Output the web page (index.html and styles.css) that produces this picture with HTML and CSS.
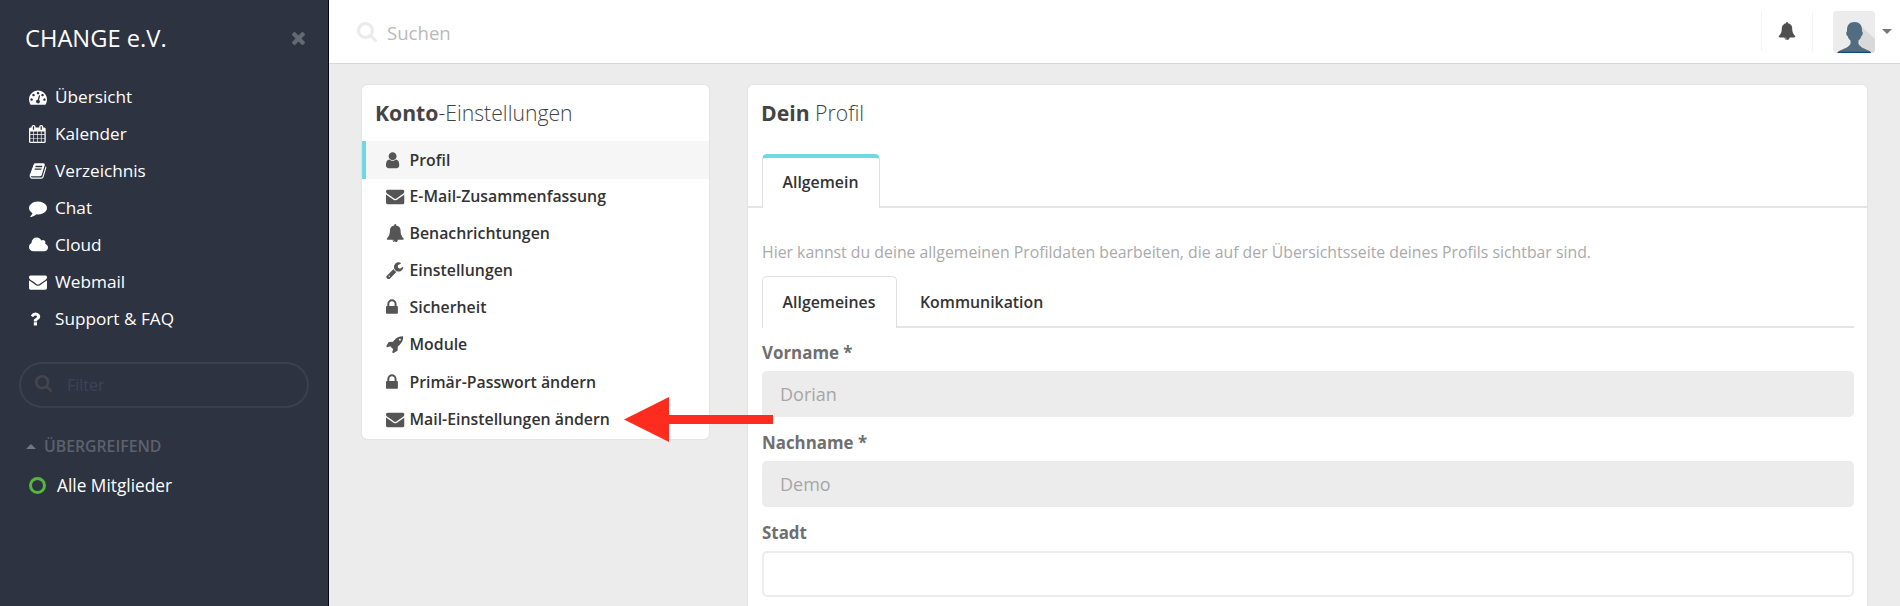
FILE: index.html
```html
<!DOCTYPE html>
<html lang="de">
<head>
<meta charset="utf-8">
<title>Konto-Einstellungen</title>
<link rel="stylesheet" href="styles.css">
</head>
<body>
<svg class="sprite" aria-hidden="true">
  <symbol id="i-dash" viewBox="0 0 1792 1792"><path d="M384 1152q0-53-37.5-90.5t-90.5-37.5-90.5 37.5-37.5 90.5 37.5 90.5 90.5 37.5 90.5-37.5 37.5-90.5zm192-448q0-53-37.5-90.5t-90.5-37.5-90.5 37.5-37.5 90.5 37.5 90.5 90.5 37.5 90.5-37.5 37.5-90.5zm428 481l101-382q6-26-7.5-48.5t-38.5-29.5-48 6.5-30 39.5l-101 382q-60 5-107 43.5t-63 98.5q-20 77 20 146t117 89 146-20 89-117q16-60-6-117t-72-91zm660-33q0-53-37.5-90.5t-90.5-37.5-90.5 37.5-37.5 90.5 37.5 90.5 90.5 37.5 90.5-37.5 37.5-90.5zm-640-640q0-53-37.5-90.5t-90.5-37.5-90.5 37.5-37.5 90.5 37.5 90.5 90.5 37.5 90.5-37.5 37.5-90.5zm448 192q0-53-37.5-90.5t-90.5-37.5-90.5 37.5-37.5 90.5 37.5 90.5 90.5 37.5 90.5-37.5 37.5-90.5zm320 448q0 261-141 483-19 29-54 29h-1402q-35 0-54-29-141-221-141-483 0-182 71-348t191-286 286-191 348-71 348 71 286 191 191 286 71 348z"/></symbol>
  <symbol id="i-cal" viewBox="64 0 1792 1792"><path d="M192 1664h288v-288h-288v288zm352 0h320v-288h-320v288zm-352-352h288v-320h-288v320zm352 0h320v-320h-320v320zm-352-384h288v-288h-288v288zm736 736h320v-288h-320v288zm-384-736h320v-288h-320v288zm768 736h288v-288h-288v288zm-384-352h320v-320h-320v320zm-352-864v-288q0-13-9.5-22.5t-22.5-9.5h-64q-13 0-22.5 9.5t-9.5 22.5v288q0 13 9.5 22.5t22.5 9.5h64q13 0 22.5-9.5t9.5-22.5zm736 864h288v-320h-288v320zm-384-384h320v-288h-320v288zm384 0h288v-288h-288v288zm32-480v-288q0-13-9.5-22.5t-22.5-9.5h-64q-13 0-22.5 9.5t-9.5 22.5v288q0 13 9.5 22.5t22.5 9.5h64q13 0 22.5-9.5t9.5-22.5zm384-64v1280q0 52-38 90t-90 38h-1408q-52 0-90-38t-38-90v-1280q0-52 38-90t90-38h128v-96q0-66 47-113t113-47h64q66 0 113 47t47 113v96h384v-96q0-66 47-113t113-47h64q66 0 113 47t47 113v96h128q52 0 90 38t38 90z"/></symbol>
  <symbol id="i-book" viewBox="0 0 1792 1792"><path d="M1703 478q40 57 18 129l-275 906q-19 64-76.5 107.5t-122.5 43.5h-923q-77 0-148.5-53.5t-99.5-131.5q-24-67-2-127 0-4 3-27t4-37q1-8-3-21.5t-3-19.5q2-11 8-21t16.5-23.5 16.5-23.5q23-38 45-91.5t30-91.5q3-10 .5-30t-.5-28q3-11 17-28t17-23q21-36 42-92t25-90q1-9-2.5-32t.5-28q4-13 22-30.5t22-22.5q19-26 42.5-84.5t27.5-96.5q1-8-3-25.5t-2-26.5q2-8 9-18t18-23 17-21q8-12 16.5-30.5t15-35 16-36 19.5-32 26.5-23.5 36-11.5 47.5 5.5l-1 3q38-9 51-9h761q74 0 114 56t18 130l-274 906q-36 119-71.5 153.5t-128.5 34.5h-869q-27 0-38 15-11 16-1 43 24 70 144 70h923q29 0 56-15.5t35-41.5l300-987q7-22 5-57 38 15 59 43zm-1064 2q-4 13 2 22.5t20 9.5h608q13 0 25.5-9.5t16.5-22.5l21-64q4-13-2-22.5t-20-9.5h-608q-13 0-25.5 9.5t-16.5 22.5zm-83 256q-4 13 2 22.5t20 9.5h608q13 0 25.5-9.5t16.5-22.5l21-64q4-13-2-22.5t-20-9.5h-608q-13 0-25.5 9.5t-16.5 22.5z"/></symbol>
  <symbol id="i-chat" viewBox="0 0 1792 1792"><path d="M1792 896q0 174-120 321.5t-326 233-450 85.5q-70 0-145-8-198 175-460 242-49 14-114 22-17 2-30.5-9t-17.5-29v-1q-3-4-.5-12t2-10 4.5-9.5l6-9 7-8.5 8-9q7-8 31-34.5t34.5-38 31-39.5 32.5-51 27-59 26-76q-157-89-247.5-220t-90.5-281q0-130 71-248.5t191-204.5 286-136.5 348-50.5q244 0 450 85.5t326 233 120 321.5z"/></symbol>
  <symbol id="i-cloud" viewBox="64 0 1920 1792"><path d="M1984 1152q0 159-112.5 271.5t-271.5 112.5h-1088q-185 0-316.5-131.5t-131.5-316.5q0-132 71-241.5t187-163.5q-2-28-2-43 0-212 150-362t362-150q158 0 286.5 88t187.5 230q70-62 166-62 106 0 181 75t75 181q0 75-41 138 129 30 213 134.5t84 239.5z"/></symbol>
  <symbol id="i-mail" viewBox="0 0 1792 1792"><path d="M1792 710v794q0 66-47 113t-113 47h-1472q-66 0-113-47t-47-113v-794q44 49 101 87 362 246 497 345 57 42 92.500 65.500t94.500 48 110 24.500h2q51 0 110-24.500t94.500-48 92.500-65.500q170-123 498-345 57-39 100-87zm0-294q0 79-49 151t-122 123q-376 261-468 325-10 7-42.500 31t-54 38.500-52 32.500-57.500 27-50 9h-2q-23 0-50-9t-57.500-27-52-32.500-54-38.500-42.500-31q-91-64-262-182.500t-205-142.500q-62-42-117-115.500t-55-136.500q0-78 41.500-130t118.500-52h1472q65 0 112.500 47t47.500 113z"/></symbol>
  <symbol id="i-help" viewBox="290 0 1792 1792"><path d="M1088 1256v240q0 16-12 28t-28 12h-240q-16 0-28-12t-12-28v-240q0-16 12-28t28-12h240q16 0 28 12t12 28zm316-600q0 54-15.500 101t-35 76.500-55 59.500-57.500 43.500-61 35.500q-41 23-68.500 65t-27.500 67q0 17-12 32.500t-28 15.500h-240q-15 0-25.500-18.500t-10.500-37.500v-45q0-83 65-156.500t143-108.500q59-27 84-56t25-76q0-42-46.500-74t-107.500-32q-65 0-108 29-35 25-107 115-13 16-31 16-12 0-25-8l-164-125q-13-10-15.500-25t5.500-28q160-266 464-266 80 0 161 31t146 83 106 127.500 41 158.500z"/></symbol>
  <symbol id="i-user" viewBox="256 0 1792 1792"><path d="M1536 1399q0 109-62.500 187t-150.500 78h-854q-88 0-150.500-78t-62.500-187q0-85 8.500-160.500t31.500-152 58.500-131 94-89 134.500-34.500q131 128 313 128t313-128q76 0 134.500 34.500t94 89 58.500 131 31.500 152 8.500 160.500zm-256-887q0 159-112.500 271.500t-271.500 112.500-271.500-112.500-112.500-271.500 112.500-271.500 271.500-112.500 271.500 112.500 112.500 271.500z"/></symbol>
  <symbol id="i-bell" viewBox="0 0 1792 1792"><path d="M912 1696q0-16-16-16-59 0-101.500-42.500t-42.500-101.500q0-16-16-16t-16 16q0 73 51.500 124.500t124.500 51.500q16 0 16-16zm816-288q0 52-38 90t-90 38h-448q0 106-75 181t-181 75-181-75-75-181h-448q-52 0-90-38t-38-90q50-42 91-88t85-119.500 74.500-158.500 50-206 19.500-260q0-152 117-282.500t307-158.500q-8-19-8-39 0-40 28-68t68-28 68 28 28 68q0 20-8 39 190 28 307 158.500t117 282.500q0 139 19.500 260t50 206 74.500 158.500 85 119.500 91 88z"/></symbol>
  <symbol id="i-wrench" viewBox="64 0 1792 1792"><path d="M448 1472q0-26-19-45t-45-19-45 19-19 45 19 45 45 19 45-19 19-45zm644-420l-682 682q-37 37-90 37-52 0-91-37l-106-108q-38-36-38-90 0-53 38-91l681-681q39 98 114.500 173.500t173.500 114.500zm634-435q0 39-23 106-47 134-164.500 217.500t-258.500 83.500q-185 0-316.500-131.500t-131.500-316.500 131.500-316.500 316.500-131.500q58 0 121.500 16.500t107.500 46.500q16 11 16 28t-16 28l-293 169v224l193 107q5-3 79-48.500t135.500-81 70.500-35.500q15 0 23.500 10t8.500 25z"/></symbol>
  <symbol id="i-lock" viewBox="320 0 1792 1792"><path d="M640 768h512v-192q0-106-75-181t-181-75-181 75-75 181v192zm832 96v576q0 40-28 68t-68 28h-960q-40 0-68-28t-28-68v-576q0-40 28-68t68-28h32v-192q0-184 132-316t316-132 316 132 132 316v192h32q40 0 68 28t28 68z"/></symbol>
  <symbol id="i-rocket" viewBox="0 0 1792 1792"><path d="M1440 448q0-40-28-68t-68-28-68 28-28 68 28 68 68 28 68-28 28-68zm224-288q0 249-75.500 430.500t-253.500 360.500q-81 80-195 176l-20 379q-2 16-16 26l-384 224q-7 4-16 4-12 0-23-9l-64-64q-13-14-8-32l85-276-281-281-276 85q-3 1-9 1-14 0-23-9l-64-64q-17-19-5-39l224-384q10-14 26-16l379-20q96-114 176-195 188-187 358-258t431-71q14 0 24 9.500t10 22.500z"/></symbol>
  <symbol id="i-search" viewBox="64 128 1664 1664"><path d="M1216 832q0-185-131.500-316.500t-316.500-131.500-316.500 131.500-131.500 316.500 131.500 316.500 316.500 131.500 316.500-131.500 131.500-316.500zm512 832q0 52-38 90t-90 38q-54 0-90-38l-343-342q-179 124-399 124-143 0-273.500-55.500t-225-150-150-225-55.500-273.500 55.500-273.500 150-225 225-150 273.500-55.500 273.500 55.500 225 150 150 225 55.500 273.500q0 220-124 399l343 343q37 37 37 90z"/></symbol>
  <symbol id="i-times" viewBox="302 366 1188 1188"><path d="M1490 1322q0 40-28 68l-136 136q-28 28-68 28t-68-28l-294-294-294 294q-28 28-68 28t-68-28l-136-136q-28-28-28-68t28-68l294-294-294-294q-28-28-28-68t28-68l136-136q28-28 68-28t68 28l294 294 294-294q28-28 68-28t68 28l136 136q28 28 28 68t-28 68l-294 294 294 294q28 28 28 68z"/></symbol>
</svg>

<div class="app">
  <aside class="sidebar">
    <header class="brand">
      <span class="brand-name">CHANGE e.V.</span>
      <svg class="close"><use href="#i-times"/></svg>
    </header>
    <nav class="nav">
      <a class="nav-item"><svg class="icon"><use href="#i-dash"/></svg>Übersicht</a>
      <a class="nav-item"><svg class="icon"><use href="#i-cal"/></svg>Kalender</a>
      <a class="nav-item"><svg class="icon"><use href="#i-book"/></svg>Verzeichnis</a>
      <a class="nav-item"><svg class="icon"><use href="#i-chat"/></svg>Chat</a>
      <a class="nav-item"><svg class="icon icon-wide"><use href="#i-cloud"/></svg>Cloud</a>
      <a class="nav-item"><svg class="icon"><use href="#i-mail"/></svg>Webmail</a>
      <a class="nav-item"><svg class="icon"><use href="#i-help"/></svg>Support &amp; FAQ</a>
    </nav>
    <div class="filter"><svg class="filter-icon"><use href="#i-search"/></svg><span>Filter</span></div>
    <div class="group"><i class="group-caret"></i>ÜBERGREIFEND</div>
    <a class="member"><i class="ring"></i>Alle Mitglieder</a>
  </aside>

  <div class="page">
    <header class="topbar">
      <svg class="search-icon"><use href="#i-search"/></svg>
      <span class="search-text">Suchen</span>
      <div class="bell-box"><svg class="bell"><use href="#i-bell"/></svg></div>
      <svg class="avatar" viewBox="0 0 42 42">
        <path class="avatar-shade" d="M27 14L42 28V42H26z"/>
        <path class="avatar-body" d="M21.500 11c5 0 7.500 3 7.500 8v1.500c1.200 0 1 4-.6 4.500-.6 2-1.700 3.500-2.900 4.600v3.200c1.500 3.600 6.500 5.200 10 6.700 1.300.6 2 1.300 2.500 2.500H4.500c.5-1.200 1.200-1.900 2.500-2.500 3.500-1.500 9-3.100 10.500-6.700v-3.200c-1.200-1.100-2.300-2.600-2.900-4.600-1.600-.5-1.800-4.500-.6-4.500V19c0-5 2.500-8 7.500-8z"/>
        <path class="avatar-base" d="M4.500 42c.2-.5.400-.8.700-1.200h32.100c.3.400.5.700.7 1.200z"/>
      </svg>
      <i class="caret"></i>
    </header>

    <main class="content">
      <section class="panel settings">
        <h2 class="title"><b>Konto</b>-Einstellungen</h2>
        <a class="row active"><svg class="icon"><use href="#i-user"/></svg>Profil</a>
        <a class="row"><svg class="icon"><use href="#i-mail"/></svg>E-Mail-Zusammenfassung</a>
        <a class="row"><svg class="icon"><use href="#i-bell"/></svg>Benachrichtungen</a>
        <a class="row"><svg class="icon"><use href="#i-wrench"/></svg>Einstellungen</a>
        <a class="row"><svg class="icon"><use href="#i-lock"/></svg>Sicherheit</a>
        <a class="row"><svg class="icon"><use href="#i-rocket"/></svg>Module</a>
        <a class="row spaced"><svg class="icon"><use href="#i-lock"/></svg>Primär-Passwort ändern</a>
        <a class="row"><svg class="icon"><use href="#i-mail"/></svg>Mail-Einstellungen ändern</a>
      </section>

      <section class="panel profile">
        <h2 class="title"><b>Dein</b> Profil</h2>
        <div class="tabs"><span class="tab tab-main">Allgemein</span></div>
        <div class="body">
          <p class="hint">Hier kannst du deine allgemeinen Profildaten bearbeiten, die auf der Übersichtsseite deines Profils sichtbar sind.</p>
          <div class="subtabs"><span class="tab tab-sub">Allgemeines</span><span class="tab-plain">Kommunikation</span></div>
          <label class="label">Vorname *</label>
          <div class="field disabled">Dorian</div>
          <label class="label">Nachname *</label>
          <div class="field disabled">Demo</div>
          <label class="label">Stadt</label>
          <div class="field"></div>
        </div>
      </section>
    </main>
  </div>
  <svg class="arrow" viewBox="0 0 149 45"><path d="M0 22.500L45 0V18H149V27H45V45z"/></svg>
</div>
</body>
</html>
```
FILE: styles.css
```css
* { box-sizing: border-box; }
body { margin: 0; font-family: "Open Sans", "Noto Sans", sans-serif; background: #ececec; }
.sprite { display: none; }
.app { display: flex; width: 1900px; height: 606px; overflow: hidden; position: relative; }

.sidebar { width: 329px; background: #2e3341; border-right: 1px solid #05070d; color: #fff; flex: none; }
.brand { display: flex; justify-content: space-between; align-items: center; height: 76px; padding: 0 23px 0 25px; }
.brand-name { font-size: 23.700px; }
.close { width: 13px; height: 13px; fill: #656974; }
.nav { padding: 2px 0 0 29px; }
.nav-item { display: flex; align-items: center; gap: 8px; height: 37px; font-size: 17.200px; }
.icon { width: 18px; height: 18px; fill: currentColor; flex: none; }
.icon-wide { width: 19px; margin-right: -1px; }
.filter { display: flex; align-items: center; gap: 15px; width: 290px; height: 46px; margin: 25px 0 0 19px; padding-left: 14px; border: 2px solid #3b4050; border-radius: 23px; font-size: 16px; color: #3d4357; }
.filter-icon { width: 17px; height: 17px; fill: #44464f; margin-top: -4px; }
.group { display: flex; align-items: center; gap: 8px; height: 24px; margin: 26px 0 0 26px; font-size: 15.800px; font-weight: 600; color: #5d616d; }
.group-caret { border: 5px solid transparent; border-top: 0; border-bottom: 5px solid #73767f; }
.member { display: flex; align-items: center; gap: 11px; height: 28px; margin: 13px 0 0 29px; font-size: 17.300px; }
.ring { width: 17px; height: 17px; border: 3px solid #55b73c; border-radius: 50%; }

.page { flex: 1; }
.topbar { display: flex; align-items: center; height: 64px; padding: 0 8px 0 28px; background: #fff; border-bottom: 1px solid #d8d8d8; }
.search-icon { width: 20px; height: 20px; fill: #ebebeb; }
.search-text { margin: 1px auto 0 10px; font-size: 18.600px; color: #b9b9b9; }
.bell-box { display: flex; align-items: center; justify-content: center; width: 52px; height: 40px; margin: 0 20px 2px 0; border: 1px solid #f4f4f4; border-width: 0 1px; }
.bell { width: 18px; height: 18px; fill: #4f4f4f; }
.avatar { width: 42px; height: 42px; border-radius: 4px; background: #ececec; }
.avatar-shade { fill: #d9d9d9; }
.avatar-body { fill: #526d82; }
.avatar-base { fill: #104a76; }
.caret { margin: 0 0 1px 7px; border: 5px solid transparent; border-top-color: #777; border-bottom: 0; }

.content { display: flex; align-items: flex-start; gap: 39px; padding: 21px 33px 0; }
.panel { background: #fff; border-radius: 5px; box-shadow: 0 0 2px rgba(0, 0, 0, .13); }
.settings { width: 347px; height: 354px; }
.profile { flex: 1; height: 560px; }
.title { margin: 0; height: 56px; padding: 0 13px; font-size: 21.200px; line-height: 56px; font-weight: 300; color: #444; }
.title b { font-weight: 700; }
.row { display: flex; align-items: center; gap: 5px; height: 37px; padding: 0 0 3px 24px; font-size: 15.850px; font-weight: 600; color: #333; }
.row .icon { fill: #555; width: 18.500px; height: 18.500px; }
.row.active { height: 38px; background: #f6f6f6; border-left: 4px solid #6fd8e3; padding: 0 0 0 20px; }
.row.spaced { margin-top: 1px; }

.tabs { display: flex; height: 67px; padding: 13px 14px 0; border-bottom: 2px solid #e5e5e5; }
.tab { display: flex; align-items: center; justify-content: center; margin-bottom: -2px; border: 1px solid #e0e0e0; border-bottom: 0; background: #fff; border-radius: 5px 5px 0 0; font-size: 15.850px; font-weight: 600; color: #333; padding: 0 1px 2px 0; }
.tab-main { width: 118px; height: 54px; border-top: 4px solid #6fd8e3; }
.tab-sub { width: 135px; height: 52px; }
.tab-plain { padding: 15px 0 0 23px; font-size: 15.850px; font-weight: 600; color: #333; }
.body { padding: 32px 13px 0 14px; }
.hint { margin: 0; height: 36px; line-height: 25px; font-size: 15.820px; color: #aaa; white-space: nowrap; }
.subtabs { display: flex; height: 52px; border-bottom: 2px solid #e5e5e5; }
.label { display: block; height: 43px; padding-top: 14px; font-size: 16.900px; line-height: 22px; font-weight: 700; color: #6f6f6f; }
.field { height: 46px; margin-bottom: 1px; border: 2px solid #ececec; border-radius: 5px; padding-left: 16px; font-size: 18px; line-height: 42px; color: #a6a6a6; }
.disabled { background: #ececec; }

/* Pointer laid over both panels */
.arrow { position: absolute; left: 624px; top: 397px; width: 149px; height: 45px; fill: #fd2c1e; }
```
